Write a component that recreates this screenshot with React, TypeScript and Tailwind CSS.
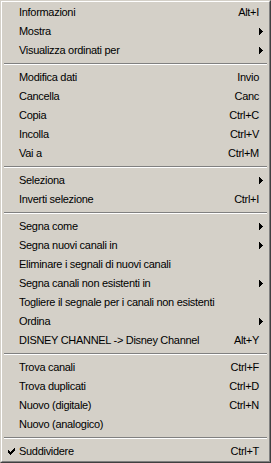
import { Fragment } from 'react'

type Item = {
  label: string
  shortcut?: string
  submenu?: boolean
  checked?: boolean
}

// null marks a separator
const MENU: (Item | null)[] = [
  { label: 'Informazioni', shortcut: 'Alt+I' },
  { label: 'Mostra', submenu: true },
  { label: 'Visualizza ordinati per', submenu: true },
  null,
  { label: 'Modifica dati', shortcut: 'Invio' },
  { label: 'Cancella', shortcut: 'Canc' },
  { label: 'Copia', shortcut: 'Ctrl+C' },
  { label: 'Incolla', shortcut: 'Ctrl+V' },
  { label: 'Vai a', shortcut: 'Ctrl+M' },
  null,
  { label: 'Seleziona', submenu: true },
  { label: 'Inverti selezione', shortcut: 'Ctrl+I' },
  null,
  { label: 'Segna come', submenu: true },
  { label: 'Segna nuovi canali in', submenu: true },
  { label: 'Eliminare i segnali di nuovi canali' },
  { label: 'Segna canali non esistenti in', submenu: true },
  { label: 'Togliere il segnale per i canali non esistenti' },
  { label: 'Ordina', submenu: true },
  { label: 'DISNEY CHANNEL -> Disney Channel', shortcut: 'Alt+Y' },
  null,
  { label: 'Trova canali', shortcut: 'Ctrl+F' },
  { label: 'Trova duplicati', shortcut: 'Ctrl+D' },
  { label: 'Nuovo (digitale)', shortcut: 'Ctrl+N' },
  { label: 'Nuovo (analogico)' },
  null,
  { label: 'Suddividere', shortcut: 'Ctrl+T', checked: true },
]

function CheckMark() {
  // classic 7x7 menu check bitmap
  const px: [number, number][] = [
    [6, 0],
    [5, 1], [6, 1],
    [0, 2], [4, 2], [5, 2], [6, 2],
    [0, 3], [1, 3], [3, 3], [4, 3], [5, 3],
    [0, 4], [1, 4], [2, 4], [3, 4], [4, 4],
    [1, 5], [2, 5], [3, 5],
    [2, 6],
  ]
  return (
    <svg width="7" height="7" viewBox="0 0 7 7" shapeRendering="crispEdges">
      {px.map(([x, y]) => (
        <rect key={`${x}-${y}`} x={x} y={y} width="1" height="1" fill="#000" />
      ))}
    </svg>
  )
}

function SubmenuArrow() {
  return (
    <svg width="4" height="7" viewBox="0 0 4 7" shapeRendering="crispEdges">
      <rect x="0" y="0" width="1" height="7" fill="#000" />
      <rect x="1" y="1" width="1" height="5" fill="#000" />
      <rect x="2" y="2" width="1" height="3" fill="#000" />
      <rect x="3" y="3" width="1" height="1" fill="#000" />
    </svg>
  )
}

function MenuRow({ item }: { item: Item }) {
  return (
    <div className="flex h-[19px] items-center pr-[5px] text-black">
      <div className="flex w-[16px] shrink-0 items-center pl-[5px]">
        {item.checked && <CheckMark />}
      </div>
      <span className="flex-1 whitespace-nowrap">{item.label}</span>
      {item.shortcut && <span className="mr-[4px] whitespace-nowrap">{item.shortcut}</span>}
      {item.submenu && <SubmenuArrow />}
    </div>
  )
}

function Separator() {
  return (
    <div className="flex h-[8px] items-center px-[1px]">
      <div className="w-full border-t border-b border-t-[#808080] border-b-white" />
    </div>
  )
}

export default function App() {
  return (
    <div className="w-[271px] h-[463px] bg-[#d4d0c8] font-['Liberation_Sans',Arial,sans-serif] text-[11px] tracking-[-0.3px] leading-none">
      <div className="h-full border border-t-[#d4d0c8] border-l-[#d4d0c8] border-b-[#404040] border-r-[#404040]">
        <div className="h-full border border-t-white border-l-white border-b-[#808080] border-r-[#808080] pt-[1px] px-[1px]">
          {MENU.map((item, i) => (
            <Fragment key={i}>
              {item ? <MenuRow item={item} /> : <Separator />}
            </Fragment>
          ))}
        </div>
      </div>
    </div>
  )
}
